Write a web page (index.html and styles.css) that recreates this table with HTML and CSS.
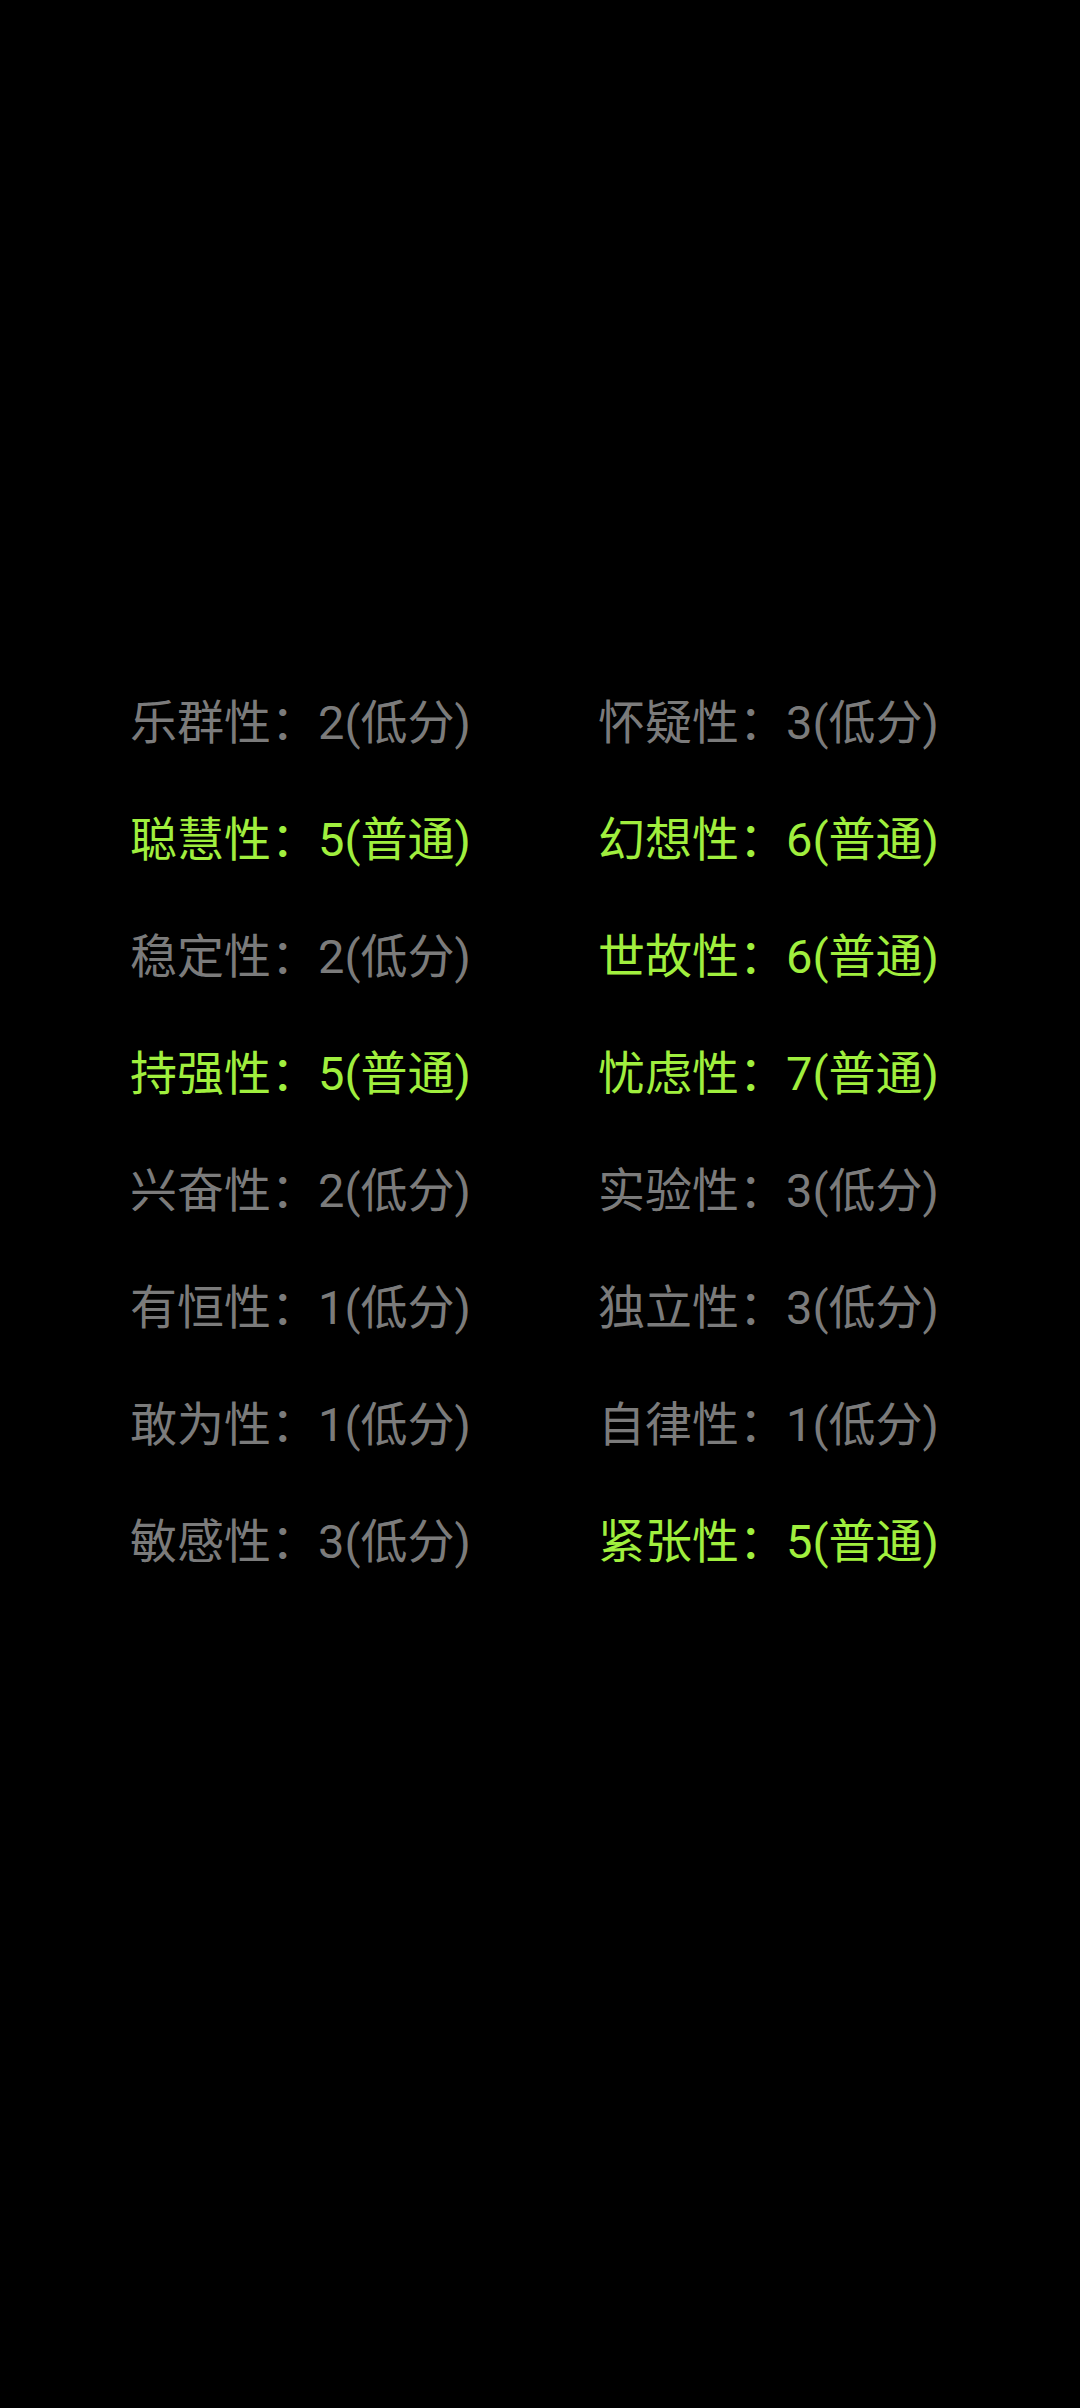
FILE: index.html
```html
<!DOCTYPE html>
<html>
<head>
    <title>性格因素</title>
    <link rel="stylesheet" href="styles.css">
</head>
<body>
    <div class="traits">
        <div class="trait low">乐群性：2(低分)</div>
        <div class="trait low">怀疑性：3(低分)</div>
        <div class="trait mid">聪慧性：5(普通)</div>
        <div class="trait mid">幻想性：6(普通)</div>
        <div class="trait low">稳定性：2(低分)</div>
        <div class="trait mid">世故性：6(普通)</div>
        <div class="trait mid">持强性：5(普通)</div>
        <div class="trait mid">忧虑性：7(普通)</div>
        <div class="trait low">兴奋性：2(低分)</div>
        <div class="trait low">实验性：3(低分)</div>
        <div class="trait low">有恒性：1(低分)</div>
        <div class="trait low">独立性：3(低分)</div>
        <div class="trait low">敢为性：1(低分)</div>
        <div class="trait low">自律性：1(低分)</div>
        <div class="trait low">敏感性：3(低分)</div>
        <div class="trait mid">紧张性：5(普通)</div>
    </div>
</body>
</html>
```

FILE: styles.css
```css
html, body {
    margin: 0;
    background: #000;
}
body {
    width: 1080px;
    height: 2408px;
    font-family: Roboto, "Noto Sans CJK SC", sans-serif;
}
.traits {
    display: grid;
    grid-template-columns: 468px auto;
    padding: 664px 0 0 130px;
}
.trait {
    font-size: 47px;
    line-height: 117px;
    white-space: nowrap;
}
.low {
    color: #7b7b7b;
}
.mid {
    color: #a0ef3e;
}
```
